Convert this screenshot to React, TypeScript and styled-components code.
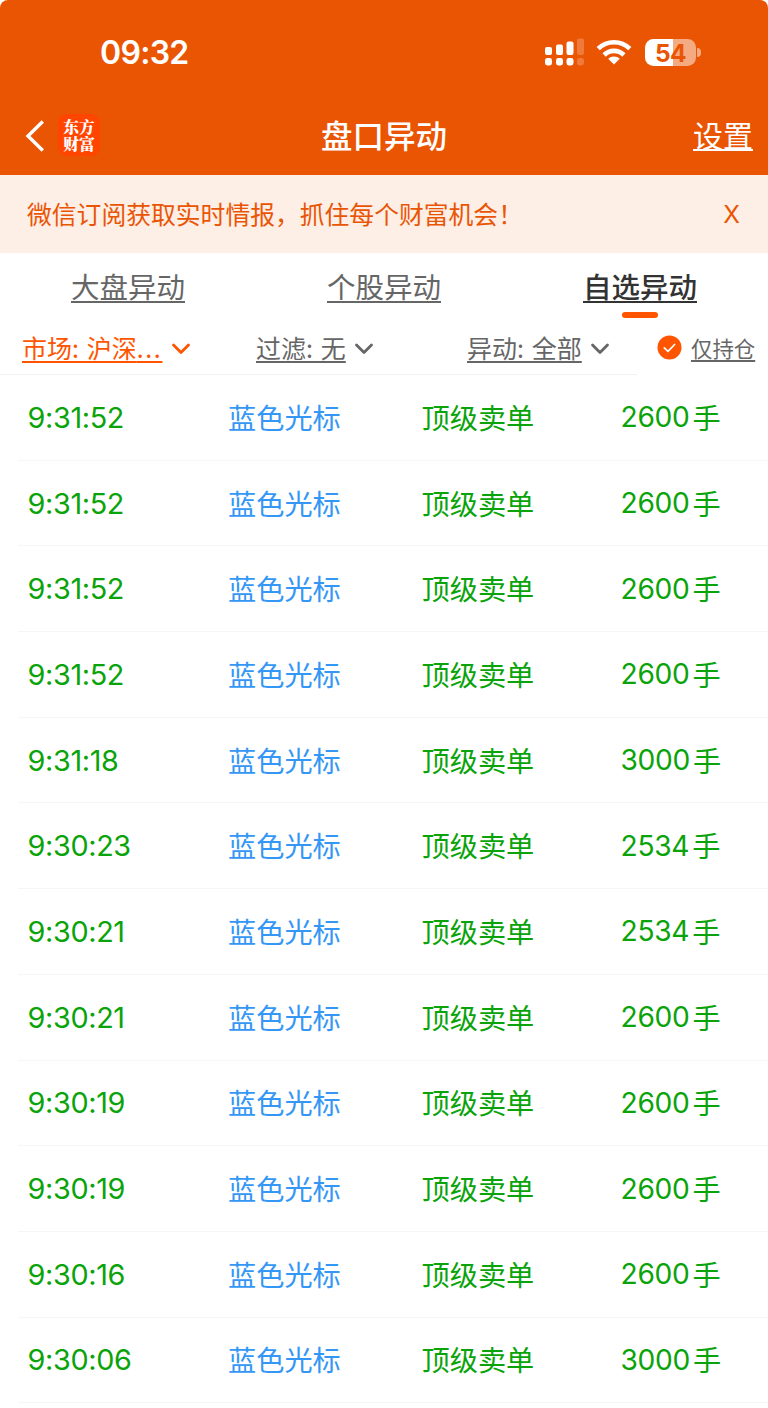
import React from "react";
import styled, { createGlobalStyle } from "styled-components";

const GlobalStyle = createGlobalStyle`
  * { box-sizing: border-box; }
  body {
    margin: 0;
    background: #fff;
    font-family: Inter, "Noto Sans CJK SC", sans-serif;
    font-weight: 400;
  }
`;

const Screen = styled.div`
  width: 768px;
  height: 1408px;
  overflow: hidden;
  background: #fff;
`;

const Header = styled.header`
  height: 174.5px;
  background: #ea5504;
  color: #fff;
  border-radius: 8px 8px 0 0;
`;

const StatusBar = styled.div`
  display: flex;
  align-items: center;
  justify-content: space-between;
  height: 98px;
  padding: 6px 67px 0 100px;
`;

const Clock = styled.span`
  padding-top: 2px;
  font-size: 32px;
  font-weight: 600;
  line-height: 40px;
  letter-spacing: -0.7px;
`;

const StatusIcons = styled.div`
  display: flex;
  align-items: center;
  height: 30px;
`;

const SignalIcon = styled.svg`
  width: 39px;
  height: 28px;
  margin-right: 12px;
`;

const WifiIcon = styled.svg`
  width: 36px;
  height: 28px;
  margin-right: 13px;
`;

const Battery = styled.div`
  display: flex;
  align-items: center;
`;

const BatteryBody = styled.div`
  width: 51px;
  height: 27px;
  border-radius: 8.5px;
  background: linear-gradient(to right, #fff 28px, #f5ab82 28px);
  color: #ea5504;
  font-size: 24.5px;
  font-weight: 700;
  line-height: 28px;
  letter-spacing: -0.5px;
  text-align: center;
`;

const BatteryCap = styled.div`
  width: 4px;
  height: 9px;
  margin-left: 1px;
  border-radius: 0 4px 4px 0;
  background: #f5ab82;
`;

const NavBar = styled.nav`
  display: grid;
  grid-template-columns: 1fr auto 1fr;
  align-items: center;
  height: 76px;
  padding: 0 15px;
`;

const NavStart = styled.div`
  display: flex;
  align-items: center;
  gap: 12px;
  padding-left: 9px;
`;

const BackIcon = styled.svg`
  width: 22px;
  height: 34px;
`;

const Logo = styled.div`
  display: flex;
  flex-direction: column;
  justify-content: center;
  width: 42px;
  height: 42px;
  margin-top: -2px;
  padding-bottom: 1px;
  border-radius: 9px;
  background: #ff4500;
  font: 900 15.8px/17px "Noto Serif CJK SC", "Noto Sans CJK SC", serif;
  text-align: center;
`;

const Title = styled.h1`
  margin: 0;
  padding-top: 2px;
  font-size: 31.5px;
  font-weight: 500;
  line-height: 44px;
`;

const Underlined = styled.span<{ $offset: number; $weight?: number }>`
  text-decoration: underline;
  text-decoration-thickness: ${(p) => p.$weight ?? 1.5}px;
  text-decoration-skip-ink: none;
  text-underline-offset: ${(p) => p.$offset}px;
  white-space: pre;
`;

const Settings = styled.div`
  justify-self: end;
  font-size: 30px;
  line-height: 44px;
`;

const Banner = styled.div`
  display: flex;
  align-items: center;
  justify-content: space-between;
  height: 78.5px;
  padding: 0 28px 2px 27px;
  background: #fdeee6;
  color: #ea5504;
  font-size: 24.8px;
`;

const Close = styled.span`
  padding-top: 2px;
  font: 24.5px Inter, sans-serif;
`;

const Tabs = styled.div`
  display: grid;
  grid-template-columns: repeat(3, 1fr);
  height: 69px;
`;

const Tab = styled.div<{ $active?: boolean }>`
  display: flex;
  flex-direction: column;
  align-items: center;
  padding-top: 15px;
  color: ${(p) => (p.$active ? "#333" : "#666")};
  font-size: 28.5px;
  font-weight: ${(p) => (p.$active ? 500 : 400)};
  line-height: 40px;
`;

const Indicator = styled.div`
  width: 36px;
  height: 6px;
  margin-top: 4px;
  border-radius: 3px;
  background: #ff5500;
`;

const FilterBar = styled.div`
  display: flex;
  height: 53px;
`;

const Filters = styled.div`
  display: grid;
  grid-template-columns: 234px 211px 1fr;
  width: 637px;
  padding-left: 22px;
  border-bottom: 1px solid #f1f1f1;
`;

const Filter = styled.div<{ $active?: boolean }>`
  display: flex;
  align-items: center;
  gap: 8.5px;
  padding-bottom: 2px;
  color: ${(p) => (p.$active ? "#ff5500" : "#666")};
  font: 25px/36px "Noto Sans CJK SC", sans-serif;
  word-spacing: 2.2px;
`;

const Ellipsis = styled.span`
  letter-spacing: 1.6px;
`;

const Chevron = styled.svg`
  width: 20px;
  height: 14px;
  margin-top: 3px;
`;

const HoldingsOnly = styled.div`
  display: flex;
  align-items: center;
  gap: 9px;
  margin-left: 20px;
  padding-bottom: 2px;
  color: #666;
  font-size: 21.4px;
`;

const CheckIcon = styled.svg`
  width: 25px;
  height: 25px;
`;

const List = styled.main`
  padding-left: 18px;
`;

const Row = styled.div`
  display: grid;
  grid-template-columns: 200px 193.5px 199px 1fr;
  align-items: center;
  height: 85.7px;
  padding-left: 10px;
  border-bottom: 1px solid #f6f6f6;
  color: #0aa30a;
  font-size: 28.2px;
`;

const Time = styled.span`
  margin-left: -0.5px;
  font-size: 28.8px;
  letter-spacing: -0.35px;
`;

const Label = styled.span<{ $link?: boolean }>`
  padding-bottom: 2px;
  color: ${(p) => (p.$link ? "#3497f5" : "inherit")};
`;

const Volume = styled.span`
  display: flex;
  align-items: center;
  gap: 3px;
  letter-spacing: -0.3px;
`;

const rows = [
  ["9:31:52", "2600"],
  ["9:31:52", "2600"],
  ["9:31:52", "2600"],
  ["9:31:52", "2600"],
  ["9:31:18", "3000"],
  ["9:30:23", "2534"],
  ["9:30:21", "2534"],
  ["9:30:21", "2600"],
  ["9:30:19", "2600"],
  ["9:30:19", "2600"],
  ["9:30:16", "2600"],
  ["9:30:06", "3000"],
];

function ChevronDown() {
  return (
    <Chevron viewBox="0 0 20 14" fill="none" stroke="currentColor" strokeWidth="2.8" strokeLinecap="round" strokeLinejoin="round">
      <path d="M2.5 3 10 10.5 17.5 3" />
    </Chevron>
  );
}

function Signal() {
  return (
    <SignalIcon viewBox="0 0 39 28" fill="#fff">
      <rect x="0" y="9" width="7" height="8" rx="2" />
      <rect x="11" y="6.5" width="7" height="10.5" rx="2" />
      <rect x="21.5" y="3.5" width="7" height="13.5" rx="2" />
      <rect x="32" y="0.5" width="7" height="16.5" rx="2" opacity="0.22" />
      <rect x="0" y="20" width="7" height="7.5" rx="2.4" />
      <rect x="11" y="20" width="7" height="7.5" rx="2.4" />
      <rect x="21.5" y="20" width="7" height="7.5" rx="2.4" />
      <rect x="32" y="20" width="7" height="7.5" rx="2.4" opacity="0.22" />
    </SignalIcon>
  );
}

function Wifi() {
  return (
    <WifiIcon viewBox="0 0 36 28" fill="none" stroke="#fff" strokeWidth="4.6">
      <path d="M2.2 10.7a22.6 22.6 0 0 1 31.6 0" />
      <path d="M8.1 17a14 14 0 0 1 19.8 0" />
      <path d="M18 26.6 12.2 20.8a8.2 8.2 0 0 1 11.6 0Z" fill="#fff" stroke="none" />
    </WifiIcon>
  );
}

export default function App() {
  return (
    <Screen>
      <GlobalStyle />
      <Header>
        <StatusBar>
          <Clock>09:32</Clock>
          <StatusIcons>
            <Signal />
            <Wifi />
            <Battery>
              <BatteryBody>54</BatteryBody>
              <BatteryCap />
            </Battery>
          </StatusIcons>
        </StatusBar>
        <NavBar>
          <NavStart>
            <BackIcon viewBox="0 0 22 34" fill="none" stroke="#fff" strokeWidth="3.4">
              <path d="M18.8 2.5 4 17 18.8 31.5" />
            </BackIcon>
            <Logo>
              <span>东方</span>
              <span>财富</span>
            </Logo>
          </NavStart>
          <Title>盘口异动</Title>
          <Settings>
            <Underlined $offset={2} $weight={2}>设置</Underlined>
          </Settings>
        </NavBar>
      </Header>
      <Banner>
        <span>微信订阅获取实时情报，抓住每个财富机会！</span>
        <Close>X</Close>
      </Banner>
      <Tabs>
        <Tab>
          <Underlined $offset={3}>大盘异动</Underlined>
        </Tab>
        <Tab>
          <Underlined $offset={3}>个股异动</Underlined>
        </Tab>
        <Tab $active>
          <Underlined $offset={3}>自选异动</Underlined>
          <Indicator />
        </Tab>
      </Tabs>
      <FilterBar>
        <Filters>
          <Filter $active>
            <Underlined $offset={3}>
              市场: 沪深<Ellipsis>...</Ellipsis>
            </Underlined>
            <ChevronDown />
          </Filter>
          <Filter>
            <Underlined $offset={3}>过滤: 无</Underlined>
            <ChevronDown />
          </Filter>
          <Filter>
            <Underlined $offset={3}>异动: 全部</Underlined>
            <ChevronDown />
          </Filter>
        </Filters>
        <HoldingsOnly>
          <CheckIcon viewBox="0 0 25 25" fill="none">
            <circle cx="12.5" cy="12.5" r="12" fill="#ff5500" />
            <path d="M7.3 12.8 11 16.3 17.6 9.5" stroke="#fff" strokeWidth="1.7" strokeLinecap="round" strokeLinejoin="round" />
          </CheckIcon>
          <Underlined $offset={3}>仅持仓</Underlined>
        </HoldingsOnly>
      </FilterBar>
      <List>
        {rows.map(([time, volume], index) => (
          <Row key={index}>
            <Time>{time}</Time>
            <Label $link>蓝色光标</Label>
            <Label>顶级卖单</Label>
            <Volume>
              <span>{volume}</span>
              <Label>手</Label>
            </Volume>
          </Row>
        ))}
      </List>
    </Screen>
  );
}
